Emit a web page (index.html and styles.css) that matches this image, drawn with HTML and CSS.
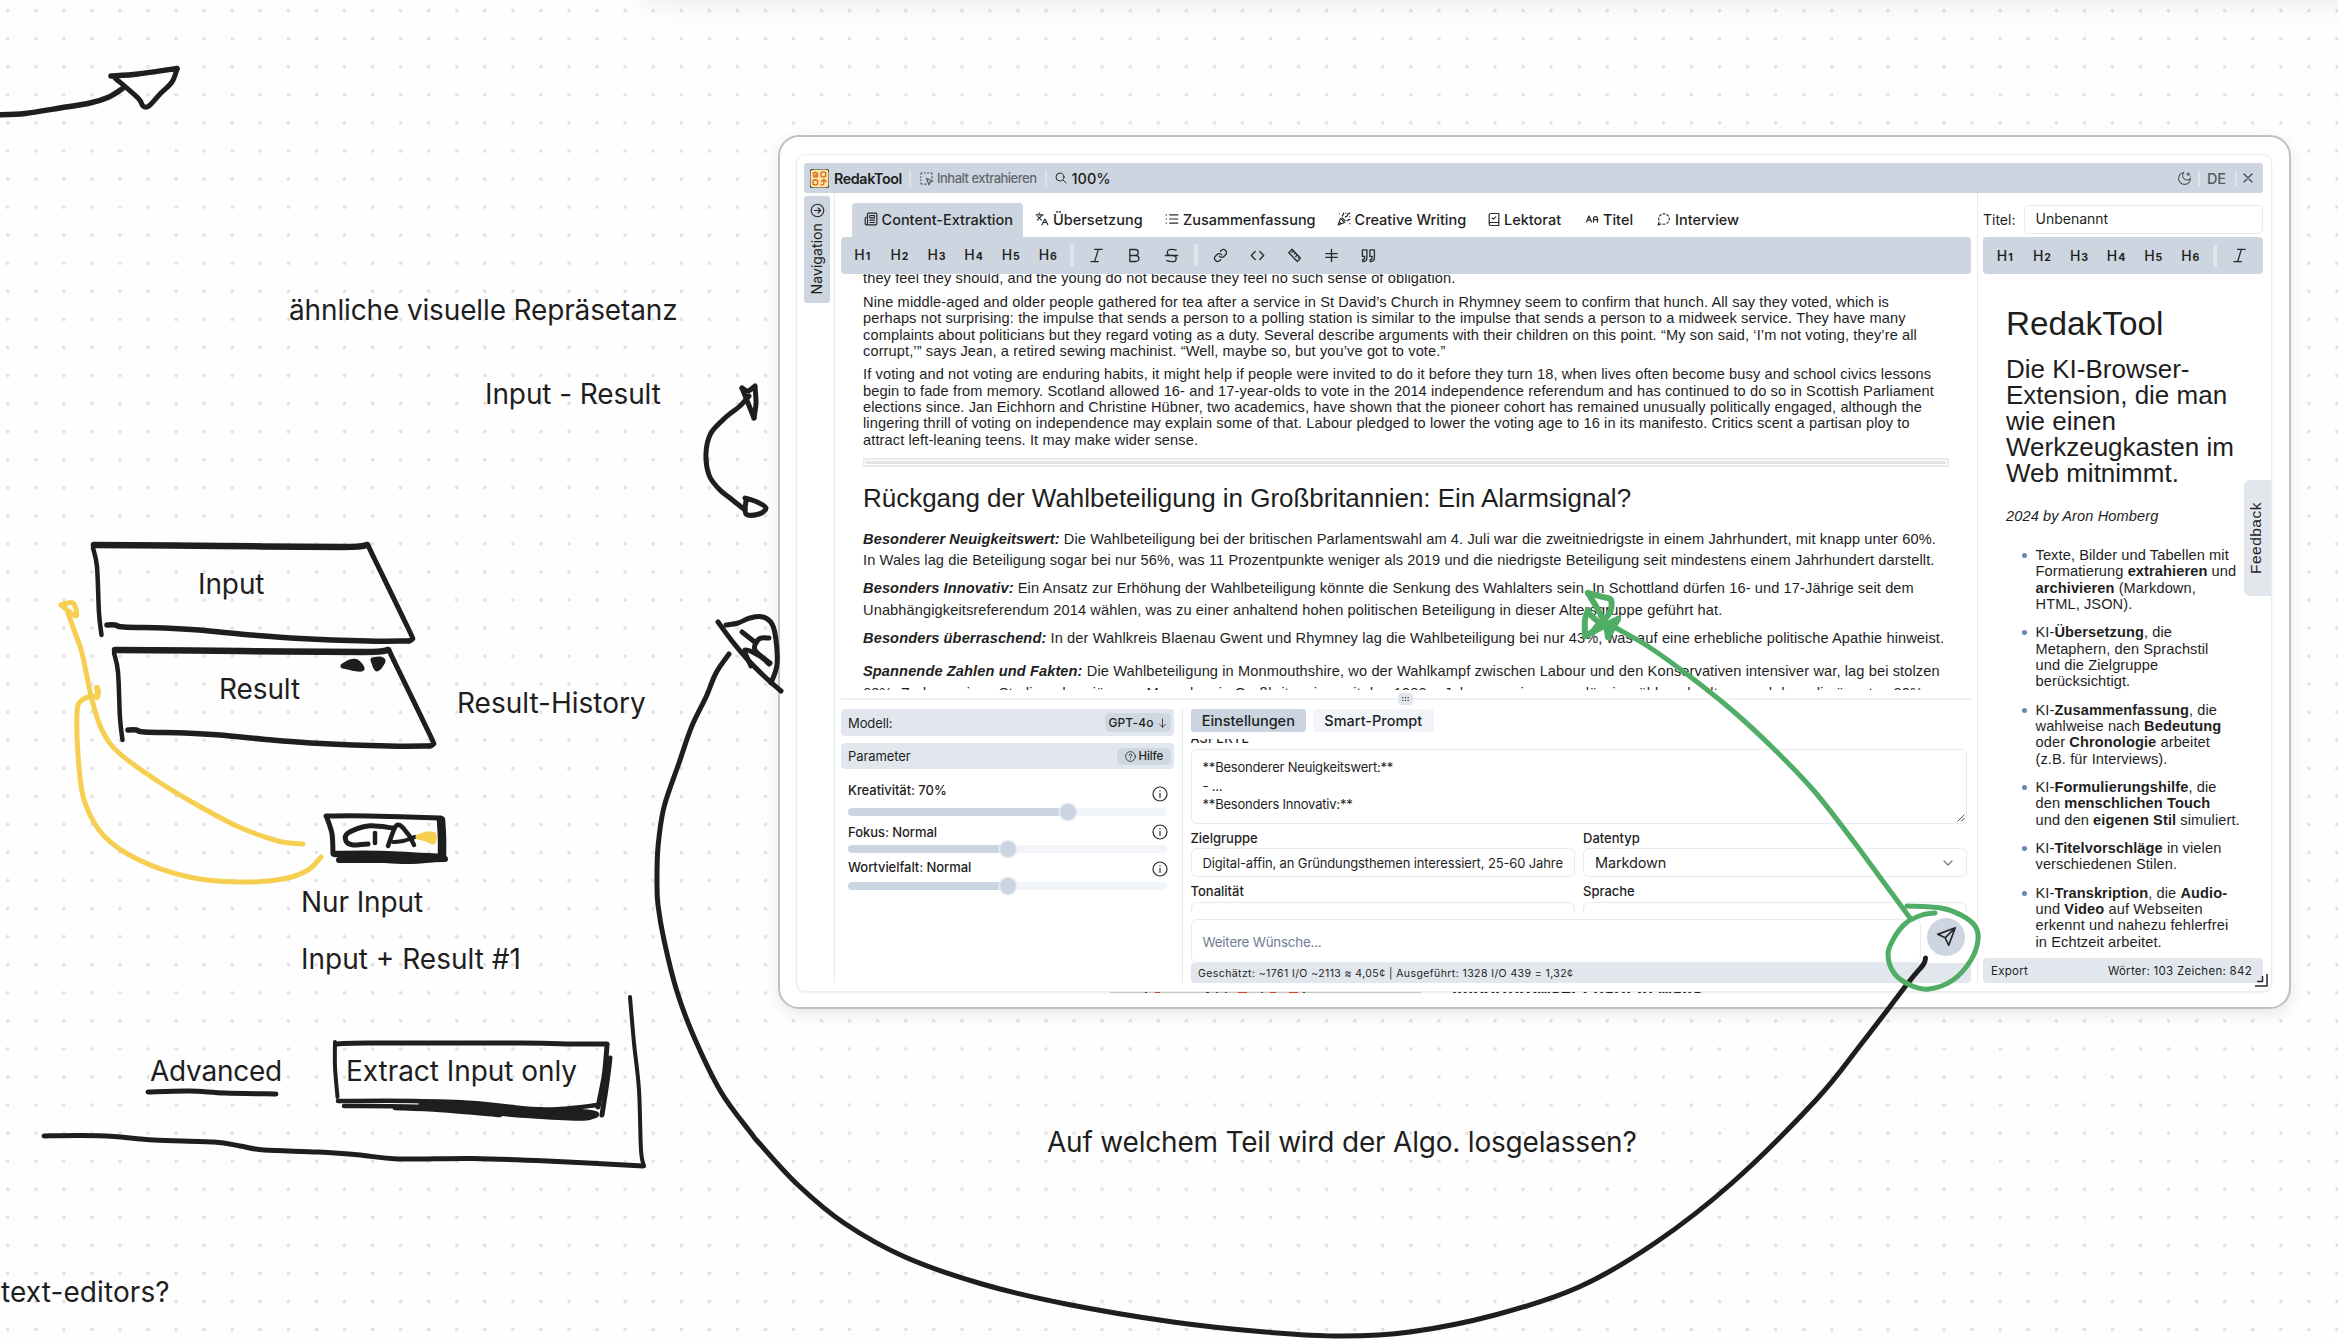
FILE: index.html
```html
<!DOCTYPE html>
<html lang="de">
<head>
<meta charset="utf-8">
<title>RedakTool Whiteboard</title>
<link rel="stylesheet" href="styles.css">
</head>
<body>
<div class="board">
  <div class="board-toolbar-shadow"></div>

  <p class="note n-repr">ähnliche visuelle Repräsetanz</p>
  <p class="note n-inres">Input - Result</p>
  <p class="note n-input">Input</p>
  <p class="note n-result">Result</p>
  <p class="note n-history">Result-History</p>
  <p class="note n-nur">Nur Input</p>
  <p class="note n-plus">Input + Result #1</p>
  <p class="note n-adv">Advanced</p>
  <p class="note n-extract">Extract Input only</p>
  <p class="note n-editors">text-editors?</p>
  <p class="note n-algo">Auf welchem Teil wird der Algo. losgelassen?</p>

  <section class="frame">
    <div class="behind"><i class="photo"></i><i class="headline">importbrowser charit in waits</i></div>
    <div class="window">
      <header class="titlebar">
        <svg class="logo" viewBox="0 0 19 19"><rect width="19" height="19" rx="3" fill="#fbe7a0"/><g fill="none" stroke="#d9622b" stroke-width="1.3"><path d="M3 4.2q2.2-1.4 4.4 0v3.6H3.4M3 6.1h4"/><rect x="11" y="3.2" width="4.6" height="4.6" rx=".8"/><rect x="3" y="11" width="4.6" height="4.8" rx="1.4"/><path d="M11 15.8h1.500q1.400 0 1.400-1.600v-3M11.500 12.500l2.400-2 2.400 2"/></g></svg>
        <b class="brand">RedakTool</b>
        <i class="sep s1"></i>
        <svg class="ic-sel" viewBox="0 0 24 24"><path d="M5 3a2 2 0 0 0-2 2M19 3a2 2 0 0 1 2 2M5 21a2 2 0 0 1-2-2M9 3h1M9 21h2M14 3h1M3 9v1M21 9v2M3 14v1M12 12l4 10 1.700-4.300L22 16z"/></svg>
        <span class="extract">Inhalt extrahieren</span>
        <i class="sep s2"></i>
        <svg class="ic-zoom" viewBox="0 0 24 24"><circle cx="10" cy="10" r="8"/><path d="M22 22l-6-6"/></svg>
        <span class="zoom">100%</span>
        <span class="grow"></span>
        <svg class="ic-moon" viewBox="0 0 24 24"><path d="M11 2.500a7 7 0 0 0 10.500 9.500A9.500 9.500 0 1 1 11 2.500M18 3v4M20 5h-4M21.500 8v.1"/></svg>
        <i class="sep"></i>
        <span class="lang">DE</span>
        <i class="sep"></i>
        <svg class="ic-x" viewBox="0 0 10 10"><path d="M1 1l8 8M9 1l-8 8"/></svg>
      </header>

      <div class="body">
        <nav class="side">
          <div class="navtab">
            <svg viewBox="0 0 24 24"><circle cx="12" cy="12" r="10"/><path d="M7 12h10M13 8l4 4-4 4"/></svg>
            <span>Navigation</span>
          </div>
        </nav>

        <main class="center">
          <div class="tabs">
            <a class="tab active t1"><svg viewBox="0 0 24 24"><path d="M4 22h16a2 2 0 0 0 2-2V4a2 2 0 0 0-2-2H8a2 2 0 0 0-2 2v16a2 2 0 0 1-4 0v-9c0-1 1-2 2-2h2M18 14h-8M18 18h-8M10 6h8v4h-8z"/></svg><span>Content-Extraktion</span></a>
            <a class="tab t2"><svg viewBox="0 0 24 24"><path d="M5 8l6 6M4 14l6-6 2-3M2 5h12M7 2h1M22 22l-5-10-5 10M14 18h6"/></svg><span>Übersetzung</span></a>
            <a class="tab t3"><svg viewBox="0 0 24 24"><path d="M8 5h14M8 12h14M8 19h14M2 5h.5M2 12h.5M2 19h.5"/></svg><span>Zusammenfassung</span></a>
            <a class="tab t4"><svg viewBox="0 0 24 24"><path d="M6 11L2 22l11-4zM9 10l5 5M4 17l3 3M4 3h.1M22 8h.1M15 2h.1M22 20h.1M22 2l-2.200.8a3 3 0 0 0-2 3c0 1-.7 1.600-1.500 1.600H16c-.9 0-1.600.6-1.800 1.500M22 13l-1-.3c-.8-.3-1.700.2-1.900 1.100-.1.700-.7 1.200-1.400 1.200H17M11 2l.3.800c.3.900-.2 1.800-1 2-.7.100-1.200.800-1.200 1.500V7"/></svg><span>Creative Writing</span></a>
            <a class="tab t5"><svg viewBox="0 0 20 24"><path d="M2 20V4a2.500 2.500 0 0 1 2.500-2H18v20H4.500a2.500 2.500 0 0 1 0-5H18M7 9.500l2 2 4-4"/></svg><span>Lektorat</span></a>
            <a class="tab t6"><svg viewBox="0 0 26 20"><path d="M2 16L7 4l5 12M4 12h6M16 16V9q0-4 4-4t4 4v7M16 11h8"/></svg><span>Titel</span></a>
            <a class="tab t7"><svg viewBox="0 0 24 24"><path d="M13.500 3.100q-1.500-.2-3 0M19.300 6.800a9 9 0 0 0-2.100-2.100M20.900 13.500q.2-1.500 0-3M17.200 19.300a9 9 0 0 0 2.100-2.100M10.500 20.900q1.500.2 3 0M3.500 17.500L2 22l4.500-1.500M3.100 10.500q-.2 1.400.2 3.400M6.800 4.700a9 9 0 0 0-2.100 2.100"/></svg><span>Interview</span></a>
          </div>
          <div class="toolbar">
            <span class="h">H<b>1</b></span><span class="h">H<b>2</b></span><span class="h">H<b>3</b></span><span class="h">H<b>4</b></span><span class="h">H<b>5</b></span><span class="h">H<b>6</b></span>
            <i class="bar"></i>
            <span class="t"><svg viewBox="0 0 16 16"><path d="M6 1.500h8M2 14.500h8M10 1.500l-4 13"/></svg></span>
            <span class="t"><svg viewBox="0 0 16 16"><path d="M3 8h6.500a3.200 3.200 0 0 1 0 6.400H3V1.600h5.800a3.200 3.200 0 0 1 0 6.400"/></svg></span>
            <span class="t"><svg viewBox="0 0 16 16"><path d="M13 2.200Q11 1.500 8 1.500 3.500 1.500 3.500 4.800 3.500 8 8 8h1q4 0 4 3.300T9 14.500q-3.500 0-6-1M1.500 8h13"/></svg></span>
            <i class="bar"></i>
            <span class="t"><svg viewBox="0 0 24 24"><path class="w2" d="M10 13a5 5 0 0 0 7.500.5l3-3a5 5 0 0 0-7-7l-1.700 1.700M14 11a5 5 0 0 0-7.500-.5l-3 3a5 5 0 0 0 7 7l1.700-1.700"/></svg></span>
            <span class="t"><svg viewBox="0 0 16 16"><path d="M10.500 3.800L14.600 8l-4.100 4.200M5.500 3.800L1.400 8l4.100 4.200"/></svg></span>
            <span class="t"><svg viewBox="0 0 16 16"><path d="M2 5l3.400-3.600 9 9.400L11 14.400zM7 3l-1.600 1.700M9 5.200L8 6.300M11 7.300L9.400 9M13 9.400l-1 1.100"/></svg></span>
            <span class="t"><svg viewBox="0 0 16 16"><path d="M2 6h12M2 10h12M8 1.500v13"/></svg></span>
            <span class="t"><svg viewBox="0 0 16 16"><path d="M1.500 2h4.800v8q0 4.500-4.500 4.500v-2.200q2 0 2-2V9H1.500zM9.500 2h4.800v8q0 4.500-4.500 4.500v-2.200q2 0 2-2V9H9.500z"/></svg></span>
          </div>

          <article class="editor">
            <p class="en">they feel they should, and the young do not because they feel no such sense of obligation.</p>
            <p class="en">Nine middle-aged and older people gathered for tea after a service in St David’s Church in Rhymney seem to confirm that hunch. All say they voted, which is<br>perhaps not surprising: the impulse that sends a person to a polling station is similar to the impulse that sends a person to a midweek service. They have many<br>complaints about politicians but they regard voting as a duty. Several describe arguments with their children on this point. “My son said, ‘I’m not voting, they’re all<br>corrupt,’” says Jean, a retired sewing machinist. “Well, maybe so, but you’ve got to vote.”</p>
            <p class="en">If voting and not voting are enduring habits, it might help if people were invited to do it before they turn 18, when lives often become busy and school civics lessons<br>begin to fade from memory. Scotland allowed 16- and 17-year-olds to vote in the 2014 independence referendum and has continued to do so in Scottish Parliament<br>elections since. Jan Eichhorn and Christine Hübner, two academics, have shown that the pioneer cohort has remained unusually politically engaged, although the<br>lingering thrill of voting on independence may explain some of that. Labour pledged to lower the voting age to 16 in its manifesto. Critics scent a partisan ploy to<br>attract left-leaning teens. It may make wider sense.</p>
            <div class="rule"><i></i></div>
            <h2>Rückgang der Wahlbeteiligung in Großbritannien: Ein Alarmsignal?</h2>
            <p class="de"><b>Besonderer Neuigkeitswert:</b> Die Wahlbeteiligung bei der britischen Parlamentswahl am 4. Juli war die zweitniedrigste in einem Jahrhundert, mit knapp unter 60%.<br>In Wales lag die Beteiligung sogar bei nur 56%, was 11 Prozentpunkte weniger als 2019 und die niedrigste Beteiligung seit mindestens einem Jahrhundert darstellt.</p>
            <p class="de"><b>Besonders Innovativ:</b> Ein Ansatz zur Erhöhung der Wahlbeteiligung könnte die Senkung des Wahlalters sein. In Schottland dürfen 16- und 17-Jährige seit dem<br>Unabhängigkeitsreferendum 2014 wählen, was zu einer anhaltend hohen politischen Beteiligung in dieser Altersgruppe geführt hat.</p>
            <p class="de"><b>Besonders überraschend:</b> In der Wahlkreis Blaenau Gwent und Rhymney lag die Wahlbeteiligung bei nur 43%, was auf eine erhebliche politische Apathie hinweist.</p>
            <p class="de last"><b>Spannende Zahlen und Fakten:</b> Die Wahlbeteiligung in Monmouthshire, wo der Wahlkampf zwischen Labour und den Konservativen intensiver war, lag bei stolzen<br>68%. Zudem zeigen Studien, dass jüngere Menschen in Großbritannien seit den 1980er Jahren weniger zuverlässig wählen als ältere, und dass die ärmsten 20%</p>
          </article>

          <div class="splitter"><i class="grip"><svg viewBox="0 0 8 6"><path d="M1 1.500h.1M4 1.500h.1M7 1.500h.1M1 4.500h.1M4 4.500h.1M7 4.500h.1"/></svg></i></div>

          <div class="lower">
            <section class="params">
              <div class="prow"><span>Modell:</span><span class="chip gpt">GPT-4o<svg viewBox="0 0 10 12"><path d="M5 1v10M1.500 7.500L5 11l3.500-3.500"/></svg></span></div>
              <div class="prow"><span>Parameter</span><span class="chip help"><svg viewBox="0 0 12 12"><circle cx="6" cy="6" r="5.300"/><path d="M4.500 4.600Q4.700 3.300 6 3.300t1.500 1.200Q7.500 5.500 6 6.300v.7M6 8.700v.1"/></svg>Hilfe</span></div>
              <div class="slider k1"><div class="cap"><span>Kreativität: 70%</span><svg viewBox="0 0 16 16"><circle cx="8" cy="8" r="7"/><path d="M8 7.300v4M8 4.700v.3"/></svg></div><div class="track"><i style="width:219.500px"></i></div></div>
              <div class="slider k2"><div class="cap"><span>Fokus: Normal</span><svg viewBox="0 0 16 16"><circle cx="8" cy="8" r="7"/><path d="M8 7.300v4M8 4.700v.3"/></svg></div><div class="track"><i style="width:159.500px"></i></div></div>
              <div class="slider k3"><div class="cap"><span>Wortvielfalt: Normal</span><svg viewBox="0 0 16 16"><circle cx="8" cy="8" r="7"/><path d="M8 7.300v4M8 4.700v.3"/></svg></div><div class="track"><i style="width:159.500px"></i></div></div>
            </section>
            <section class="prompt">
              <div class="ptabs"><span class="on">Einstellungen</span><span class="off">Smart-Prompt</span></div>
              <div class="form">
                <div class="aspects">ASPEKTE</div>
                <div class="area">**Besonderer Neuigkeitswert:**<br>- ...<br>**Besonders Innovativ:**<svg viewBox="0 0 10 10"><path d="M1 9l8-8M5.500 9L9 5.500"/></svg></div>
                <div class="cols">
                  <div class="c1"><label>Zielgruppe</label><div class="inp">Digital-affin, an Gründungsthemen interessiert, 25-60 Jahre</div><label>Tonalität</label><div class="inp"></div></div>
                  <div class="c2"><label>Datentyp</label><div class="inp big">Markdown<svg viewBox="0 0 10 6"><path d="M1 1l4 4 4-4"/></svg></div><label>Sprache</label><div class="inp big low">Deutsch</div></div>
                </div>
              </div>
              <div class="wish"><div class="wishbox">Weitere Wünsche...</div><div class="send"><svg viewBox="0 0 24 24"><path d="M22 2L2 9.500l8.500 4L14.500 22zM22 2L10.500 13.500"/></svg></div></div>
              <div class="status">Geschätzt: ~1761 I/O ~2113 ≈ 4,05¢ | Ausgeführt: 1328 I/O 439 = 1,32¢</div>
            </section>
          </div>
        </main>

        <aside class="right">
          <div class="titlerow"><span>Titel:</span><div class="tinput">Unbenannt</div></div>
          <div class="toolbar">
            <span class="h">H<b>1</b></span><span class="h">H<b>2</b></span><span class="h">H<b>3</b></span><span class="h">H<b>4</b></span><span class="h">H<b>5</b></span><span class="h">H<b>6</b></span>
            <i class="bar"></i>
            <span class="t"><svg viewBox="0 0 16 16"><path d="M6 1.500h8M2 14.500h8M10 1.500l-4 13"/></svg></span>
          </div>
          <article class="doc">
            <h1>RedakTool</h1>
            <h3>Die KI-Browser-<br>Extension, die man<br>wie einen<br>Werkzeugkasten im<br>Web mitnimmt.</h3>
            <p><em>2024 by Aron Homberg</em></p>
            <ul>
              <li>Texte, Bilder und Tabellen mit<br>Formatierung <b>extrahieren</b> und<br><b>archivieren</b> (Markdown,<br>HTML, JSON).</li>
              <li>KI-<b>Übersetzung</b>, die<br>Metaphern, den Sprachstil<br>und die Zielgruppe<br>berücksichtigt.</li>
              <li>KI-<b>Zusammenfassung</b>, die<br>wahlweise nach <b>Bedeutung</b><br>oder <b>Chronologie</b> arbeitet<br>(z.B. für Interviews).</li>
              <li>KI-<b>Formulierungshilfe</b>, die<br>den <b>menschlichen Touch</b><br>und den <b>eigenen Stil</b> simuliert.</li>
              <li>KI-<b>Titelvorschläge</b> in vielen<br>verschiedenen Stilen.</li>
              <li>KI-<b>Transkription</b>, die <b>Audio-</b><br>und <b>Video</b> auf Webseiten<br>erkennt und nahezu fehlerfrei<br>in Echtzeit arbeitet.</li>
            </ul>
          </article>
          <footer><span>Export</span><span>Wörter: 103 Zeichen: 842</span></footer>
        </aside>
      </div>
      <div class="feedback"><span>Feedback</span></div>
      <svg class="resize" viewBox="0 0 14 14"><path d="M1 13h12V1M3 8.500h5.500V3"/></svg>
    </div>
  </section>

  <svg class="ink" viewBox="0 0 2338 1340"></svg>
</div>
<script src="ink.js"></script>
</body>
</html>
```
FILE: styles.css
```css
* { box-sizing: border-box; }
body { margin: 0; font-family: Inter, "Liberation Sans", sans-serif; color: #1e1e1e; }
p, h1, h2, h3, ul { margin: 0; padding: 0; font-weight: 400; }
svg { fill: none; stroke: #26292e; stroke-linecap: round; stroke-linejoin: round; flex: none; display: block; }
.board {
  position: relative; width: 2338px; height: 1340px; overflow: hidden;
  background-color: #fefefe;
  background-image: radial-gradient(circle, #e1e1e1 1.4px, rgba(225,225,225,0) 2.2px);
  background-size: 28.07px 28.07px; background-position: -6.3px -3.4px;
}
.board-toolbar-shadow { position: absolute; left: 640px; top: -40px; width: 1800px; height: 40px; box-shadow: 0 0 30px rgba(0,0,0,.09); }

/* free text on the board */
.note { position: absolute; font-size: 28px; line-height: 34px; white-space: nowrap; letter-spacing: -.1px; }
.n-repr { left: 289px; top: 293px; letter-spacing: -.14px; }
.n-inres { left: 485px; top: 377px; }
.n-input { left: 198px; top: 567px; }
.n-result { left: 219px; top: 672px; }
.n-history { left: 457px; top: 686px; letter-spacing: 0; }
.n-nur { left: 301px; top: 885px; }
.n-plus { left: 301px; top: 942px; letter-spacing: 0; }
.n-adv { left: 150px; top: 1054px; letter-spacing: -.25px; }
.n-extract { left: 346px; top: 1054px; letter-spacing: -.05px; }
.n-editors { left: 1px; top: 1275px; letter-spacing: .1px; }
.n-algo { left: 1047px; top: 1125px; letter-spacing: -.2px; }

.frame { position: absolute; left: 778px; top: 135px; width: 1513px; height: 874px; border: 2px solid #c0c0c0; border-radius: 21px; background: #fff; box-shadow: 0 5px 16px rgba(0,0,0,.09); padding: 18px 17px; }
.behind { position: absolute; left: 1px; right: 0; top: 847px; height: 9px; overflow: hidden; }
.behind .photo { position: absolute; left: 329px; top: 6px; width: 311px; height: 3px; background: linear-gradient(90deg, transparent 35px, #444 35px 37px, transparent 37px 45px, #c44 45px 50px, transparent 50px 96px, #444 96px 99px, transparent 99px 106px, #555 106px 108px, transparent 108px 115px, #555 115px 117px, transparent 117px 128px, #d9492b 128px 137px, transparent 137px 151px, #555 151px 153px, transparent 153px 160px, #d9492b 160px 166px, transparent 166px 179px, #d9492b 179px 188px, transparent 188px 193px, #444 193px 195px, transparent 195px), #d5d3c8; }
.behind .headline { position: absolute; left: 671px; top: -1px; font: 700 18px/18px "Liberation Sans", sans-serif; white-space: nowrap; letter-spacing: 0; }
.window { position: relative; width: 1474px; height: 836px; border-radius: 8px; background: #fff; box-shadow: 0 0 0 1px #ececec, 0 1px 3px rgba(0,0,0,.14); padding: 8px 8px 0 7px; }

.titlebar { height: 30px; background: #cdd5e0; border-radius: 3px; display: flex; align-items: center; padding: 0 10px 0 6px; white-space: nowrap; }
.titlebar .logo { width: 19px; height: 19px; }
.brand { font-weight: 600; font-size: 14.300px; width: 68px; margin-left: 5px; letter-spacing: -.4px; }
.sep { width: 2px; height: 15px; background: #dfe5ed; }
.s1 { margin-left: 7px; }
.ic-sel { width: 15px; height: 15px; margin-left: 8px; stroke: #555b63; stroke-width: 2; }
.extract { font-size: 13px; font-weight: 500; color: #63686f; margin-left: 3px; width: 100px; letter-spacing: -.5px; }
.s2 { margin-left: 8px; }
.ic-zoom { width: 12px; height: 12px; margin-left: 8px; stroke-width: 2; }
.zoom { font-size: 14.500px; font-weight: 500; margin-left: 4.500px; }
.grow { flex: 1; }
.ic-moon { width: 15px; height: 15px; margin-right: 6px; stroke: #50555c; stroke-width: 1.800; }
.lang { font-size: 14.500px; font-weight: 500; color: #555a61; margin: 0 8px 0 7px; width: 20px; letter-spacing: -.3px; }
.ic-x { width: 10px; height: 10px; margin-left: 6px; stroke: #3d4249; stroke-width: 1.200; }

.body { display: flex; height: 790px; }
.side { width: 31px; border-right: 1px solid #e7e9ef; padding-top: 3px; }
.navtab { width: 26px; height: 107px; background: #cdd5e0; border-radius: 3px; display: flex; flex-direction: column; align-items: center; padding-top: 7px; gap: 5px; }
.navtab svg { width: 15px; height: 15px; stroke-width: 1.800; }
.navtab span { writing-mode: vertical-rl; transform: rotate(180deg); font-size: 14.200px; line-height: 16px; white-space: nowrap; }

.center { width: 1142px; padding: 0 6px 0 5.500px; display: flex; flex-direction: column; }
.tabs { display: flex; height: 44px; align-items: flex-end; padding-left: 11px; }
.tab { display: flex; align-items: center; height: 34px; gap: 4px; font-size: 14.500px; font-weight: 500; white-space: nowrap; padding: 0 0 1px 12px; }
.tab svg { width: 14px; height: 14px; stroke-width: 2; }
.tab.active { background: #cdd5e0; border-radius: 4px 4px 0 0; }
.t1 { width: 171.500px; } .t2 { width: 130px; } .t3 { width: 171.500px; } .t4 { width: 151.500px; } .t5 { width: 97px; } .t6 { width: 72px; }
.t5 svg { width: 12px; height: 15px; }
.t6 svg { height: 10px; stroke-width: 2.500; }
.toolbar { height: 37px; flex: none; background: #cdd5e0; border-radius: 4px; display: flex; align-items: center; padding-left: 3.300px; }
.toolbar span { width: 37.100px; display: flex; justify-content: center; align-items: baseline; font-size: 14px; line-height: 16px; font-weight: 500; gap: 1px; }
.toolbar .h { padding-top: 2px; }
.toolbar span b { font-size: 10.500px; font-weight: 700; }
.toolbar .t { align-items: center; }
.toolbar svg { width: 15px; height: 15px; stroke-width: 1.400; }
.toolbar .w2 { stroke-width: 2; }
.bar { width: 4px; height: 22px; background: #dfe5ed; margin: 0 4px; }

.editor { height: 416.500px; overflow: hidden; padding-left: 22.500px; white-space: nowrap; font-family: "Liberation Sans", Arial, sans-serif; font-size: 14.600px; letter-spacing: .11px; }
.en { line-height: 16.400px; margin-bottom: 6.800px; }
.en:first-child { margin-top: -4px; margin-bottom: 7.500px; }
.rule { width: 1086px; height: 9px; border: 2px solid #ebebeb; padding: 1px; margin: 9.300px 0 0; }
.rule i { display: block; height: 3px; background: #e3e3e3; }
.editor h2 { font-size: 26px; line-height: 30px; margin: 16px 0 16.200px; letter-spacing: -.02px; }
.de { line-height: 21.500px; margin-bottom: 6.700px; }
.de b { font-style: italic; }
.de.last { margin-top: 11.400px; }

.splitter { margin-top: 8.500px; height: 2px; background: #eff1f6; display: flex; justify-content: center; align-items: center; flex: none; }
.grip { width: 15px; height: 12px; border-radius: 3px; background: #e1e6ed; display: flex; align-items: center; justify-content: center; margin-left: -1px; }
.grip svg { width: 7px; height: 6px; stroke-width: 1.500; }
.lower { display: flex; padding-top: 9px; height: 283px; }
.params { width: 342px; border-right: 1px solid #e7e9f1; padding-right: 7.500px; }
.prow { height: 26.500px; background: #e2e7ee; border-radius: 4px; margin-bottom: 7px; display: flex; align-items: center; justify-content: space-between; padding: 0 3.500px 0 7.500px; font-size: 13px; letter-spacing: -.1px; }
.chip { background: #cfd7e1; border-radius: 5px; display: flex; align-items: center; font-weight: 500; }
.gpt { width: 66px; height: 19px; font-size: 12px; padding-left: 4px; gap: 5px; letter-spacing: .1px; }
.gpt svg { width: 9px; height: 10px; }
.help { width: 54px; height: 17px; font-size: 11.500px; padding-left: 8px; gap: 3px; }
.help svg { width: 11px; height: 11px; stroke-width: .9; }
.slider { padding: 0 6px 0 7.500px; font-size: 13px; font-weight: 500; letter-spacing: -.05px; }
.cap { display: flex; justify-content: space-between; line-height: 16px; }
.cap svg { width: 16px; height: 16px; stroke-width: 1.200; }
.track { height: 8px; margin-right: 1px; border-radius: 4px; background: #f1f5f9; display: flex; align-items: center; }
.track i { height: 8px; border-radius: 4px; background: #cbd5e1; display: flex; align-items: center; justify-content: flex-end; }
.track i::after { content: ""; width: 16px; height: 16px; border-radius: 50%; background: #cbd5e1; margin-right: -8px; flex: none; box-shadow: 0 0 0 1.500px #e9eef4; }
.k1 { padding-top: 6px; } .k1 svg { margin-top: 4px; } .k1 .track { margin-top: 6px; }
.k2 { padding-top: 8px; } .k2 .track { margin-top: 5px; }
.k3 { padding-top: 6px; } .k3 svg { margin-top: 2px; } .k3 .track { margin-top: 4.500px; }

.prompt { width: 788px; padding-left: 8px; display: flex; flex-direction: column; }
.ptabs { display: flex; gap: 7px; height: 23px; font-size: 14.500px; font-weight: 500; line-height: 24px; text-align: center; flex: none; }
.ptabs .on { width: 115.500px; background: #cbd5e1; border-radius: 3px; }
.ptabs .off { width: 120.500px; background: #f1f5f9; border-radius: 3px; }
.form { height: 173px; margin-top: 6.500px; overflow: hidden; padding-right: 4px; flex: none; }
.aspects { font-size: 12.500px; font-weight: 500; line-height: 16px; margin-top: -7.800px; height: 18px; letter-spacing: .3px; }
.area { position: relative; height: 74.500px; border: 1.500px solid #e8eaf1; border-radius: 6px; padding: 8px 11px; font-size: 13px; line-height: 18.600px; letter-spacing: -.2px; }
.area svg { position: absolute; right: 1px; bottom: 1px; width: 8px; height: 8px; stroke-width: 1; }
.cols { display: flex; gap: 8px; padding-top: 6px; }
.c1 { width: 384.500px; } .c2 { flex: 1; }
.cols label { display: block; font-size: 13px; font-weight: 500; line-height: 16px; margin-bottom: 2.500px; }
.inp { height: 29px; border: 1.500px solid #e8eaf1; border-radius: 6px; display: flex; align-items: center; justify-content: space-between; padding: 0 13px 0 11px; font-size: 13px; margin-bottom: 6px; white-space: nowrap; letter-spacing: -.13px; }
.big { font-size: 14.500px; }
.low { padding-top: 2px; }
.inp svg { width: 10px; height: 6px; stroke: #777; stroke-width: 1.200; }
.wish { display: flex; margin-top: 7px; height: 44px; flex: none; }
.wishbox { width: 730.500px; border: 1.500px solid #e8eaf1; border-radius: 6px; padding-left: 11px; font-size: 13.300px; letter-spacing: -.18px; color: #6f7c93; line-height: 44px; }
.send { width: 38px; height: 38px; margin: -1px 0 0 6px; border-radius: 50%; background: #cdd5e0; display: flex; align-items: center; justify-content: center; }
.send svg { width: 21px; height: 21px; stroke-width: 2; }
.status { height: 20px; background: #e2e7ee; border-radius: 4px; font-size: 10.500px; line-height: 21px; letter-spacing: .41px; padding-left: 7.500px; flex: none; white-space: nowrap; }

.right { width: 286px; border-left: 1px solid #e9ebf0; padding-left: 5px; display: flex; flex-direction: column; }
.titlerow { display: flex; align-items: center; height: 44px; padding-top: 8px; font-size: 14px; justify-content: space-between; flex: none; }
.tinput { width: 239px; height: 29px; border: 1.500px solid #e8eaf1; border-radius: 5px; padding-left: 10.500px; line-height: 26px; }
.doc { flex: 1; min-height: 0; padding: 28px 0 0 23px; font-family: "Liberation Sans", Arial, sans-serif; font-size: 14.600px; letter-spacing: .1px; white-space: nowrap; }
.doc h1 { font-size: 33.300px; line-height: 44px; letter-spacing: 0; }
.doc h3 { font-size: 26px; line-height: 26.100px; margin-top: 9.500px; letter-spacing: 0; }
.doc p { line-height: 17px; margin-top: 22.500px; }
.doc ul { list-style: none; padding-left: 29.500px; margin-top: 21.500px; }
.doc li { line-height: 16.330px; margin-bottom: 12px; }
.doc li::before { content: ""; float: left; width: 5px; height: 5px; border-radius: 50%; background: #6a86b3; margin: 6px 0 0 -13.500px; }
footer { height: 25px; background: #e2e7ee; border-radius: 4px; display: flex; justify-content: space-between; align-items: center; padding: 1px 11px 0 8px; font-size: 11.500px; letter-spacing: .28px; white-space: nowrap; flex: none; }
.feedback { position: absolute; right: 0; top: 325px; width: 27px; height: 116px; background: #e2e7ee; border-radius: 6px 0 0 6px; display: flex; align-items: center; justify-content: center; }
.feedback span { writing-mode: vertical-rl; transform: rotate(180deg); font: 15.500px/18px "Liberation Sans", sans-serif; letter-spacing: .5px; margin-right: 3px; }
.resize { position: absolute; right: 3px; bottom: 4px; width: 14px; height: 14px; stroke-width: 1.500; stroke-linecap: butt; stroke-linejoin: miter; }
.ink { position: absolute; left: 0; top: 0; width: 2338px; height: 1340px; }
```
FILE: ink.js
```js
// Pen strokes on the board: [colour, width, points, filled]. Curves pass through every point.
const K = '#1e1e1e', Y = '#f6cf50', G = '#50ad66';
const box = (dx, dy) => [
  [K, 6.5, [[94+dx,545+dy],[220+dx,546+dy],[343+dx,547+dy],[367+dx,545+dy]]],
  [K, 5, [[368+dx,545+dy],[375+dx,560+dy],[409+dx,630+dy],[412+dx,639+dy],[408+dx,641+dy]]],
  [K, 5.5, [[409+dx,641+dy],[368+dx,641+dy],[300+dx,638.5+dy],[240+dx,634+dy],[199+dx,630+dy],[164+dx,628+dy],[124+dx,627+dy],[115+dx,625+dy],[107+dx,625+dy]]],
  [K, 4.5, [[93+dx,548+dy],[97+dx,567+dy],[99+dx,613+dy],[101.5+dx,635+dy]]]
];
const strokes = [
  [K, 5.5, [[-4,115],[25,113.5],[60,108],[90,103],[109,97],[122,89]]],
  [K, 5.5, [[111,76],[138,74],[177,68.5]]],
  [K, 5, [[177,69],[172,82],[160,94],[149,106],[143,106],[138,98],[115,78]]],
  [K, 5, [[742,388],[748,391],[755,386]]], [K, 5, [[755,387],[756,403],[754,418]]], [K, 5, [[754,418],[742,388]]],
  [K, 5, [[749,396],[740,406],[726,417],[711,433],[706,453],[709,475],[719,489],[730,498],[745,510]]],
  [K, 5, [[745,498],[757,502],[766,508],[759,514],[746,514],[746,500]]],
  ...box(0, 0), ...box(21, 105),
  [K, 5, [[343,666],[350,662],[357,662],[362,669],[352,668],[343,666]], true],
  [K, 5, [[373,660],[379,659],[383,661],[377,669],[373,660]], true],
  [Y, 5, [[303,844],[278,841],[239,827],[199,806],[159,782],[119,753],[102,730],[92,700],[82,653],[74,630],[68,613]]],
  [Y, 5, [[61,605],[73,603],[76,616],[61,605]]],
  [Y, 5, [[321,857],[308,870],[283,879],[239,882],[189,877],[139,860],[104,836],[85,803],[79,767],[77,713],[82,700],[93,696]]],
  [Y, 6, [[97,688],[98,692],[97,697]]],
  [K, 5, [[326,816],[368,816],[440,818]]],
  [K, 8.5, [[441,820],[442,838],[442,857]]],
  [K, 5, [[327,818],[332,834],[333,854]]],
  [K, 6.5, [[335,854],[380,854],[441,857]]],
  [K, 6, [[339,860],[390,860],[445,859]]],
  [K, 6, [[370,859],[408,861],[435,859]]],
  [K, 5, [[393,828],[368,826],[348,833],[346,841],[353,845],[368,844]]],
  [K, 4.5, [[375,833],[375,843]]],
  [K, 4.5, [[388,846],[397,825],[408,834],[414,845]]],
  [K, 4, [[393,842],[403,841],[415,837]]],
  [Y, 5, [[418,837],[427,834],[434,835],[433,842],[426,839],[418,837]], true],
  [K, 5, [[718,622],[732,641],[748,660],[765,677],[781,691]]],
  [K, 5, [[726,625],[738,623],[750,618],[763,617],[772,624],[776,640],[777,665],[771,683]]],
  [K, 5, [[742,632],[756,643]]], [K, 5, [[769,638],[759,639],[755,650],[770,663]]],
  [K, 5, [[751,666],[745,650],[760,656],[769,664]]],
  [K, 5, [[729,654],[716,673],[706,697],[691.5,727],[679,763],[664,807],[658,847],[657,883],[658,905],[664,940],[676.5,990],[694,1037],[721,1092],[751,1133],[760,1144],[798,1185],[844,1223],[905,1257],[982,1284],[1066,1304],[1173,1322],[1265,1332],[1342,1336],[1410,1332],[1495,1315],[1579,1287],[1655,1243],[1732,1183],[1816,1100],[1862,1043],[1908,983],[1923,965],[1925.5,958]]],
  [K, 4, [[630,997],[634,1043],[639,1090],[641,1150],[644,1166]]],
  [K, 5, [[44,1136],[80,1135.5],[114,1136.5],[154,1140],[214,1142],[240,1146],[264,1150],[318,1152],[360,1155],[398,1159],[473,1158.5],[547,1161],[643,1166]]],
  [K, 5, [[148,1092],[189,1091],[225,1093],[276,1094]]],
  [K, 4, [[335,1042],[335,1067],[337.5,1097]]],
  [K, 5, [[336,1044],[368,1043],[522,1043],[572,1044],[607,1044]]],
  [K, 5, [[607,1045],[606,1058],[604,1077],[598,1107]]],
  [K, 5, [[610,1058],[607,1082],[602,1115]]],
  [K, 4.5, [[338,1101],[413,1101],[473,1103],[532,1109],[560,1109],[598,1105]]],
  [K, 4.5, [[344,1106],[423,1107],[480,1112],[530,1116],[583,1118.5],[596,1114]]],
  [K, 4.5, [[395,1108],[440,1110],[500,1115]]],
  [K, 3, [[420,1104],[473,1104],[532,1109],[575,1110],[597,1113],[583,1118],[497,1113],[420,1104]], true],
  [G, 5, [[1616,628],[1649,647],[1688,675],[1733,711],[1775,750],[1815,792],[1854,842],[1882,880],[1910,918]]],
  [G, 5, [[1935,913],[1922,915],[1906,923],[1894,938],[1888,954],[1894,973],[1910,985],[1929,989],[1953,980],[1971,960],[1978,940],[1975,926],[1961,915],[1941,908],[1907,906]]],
  [G, 6, [[1588,593],[1597,608],[1605,623],[1608,637]]],
  [G, 6, [[1608,637],[1618,619]]],
  [G, 6, [[1618,619],[1606,625],[1585,636]]],
  [G, 6, [[1585,636],[1585,620],[1588,610]]],
  [G, 6, [[1588,612],[1600,622],[1610,612],[1611,600],[1603,597],[1588,593]]],
  [G, 6, [[1592,633],[1600,624],[1612,628]]]
];
const svg = document.querySelector('.ink');
for (const [color, width, p, filled] of strokes) {
  let d = `M${p[0]}`;
  for (let i = 0; i < p.length - 1; i++) {
    const a = p[i - 1] || p[i], b = p[i], c = p[i + 1], e = p[i + 2] || c;
    d += `C${b[0] + (c[0] - a[0]) / 6} ${b[1] + (c[1] - a[1]) / 6} ${c[0] - (e[0] - b[0]) / 6} ${c[1] - (e[1] - b[1]) / 6} ${c}`;
  }
  const path = document.createElementNS('http://www.w3.org/2000/svg', 'path');
  path.setAttribute('d', d);
  path.setAttribute('stroke', color);
  path.setAttribute('stroke-width', width);
  path.setAttribute('fill', filled ? color : 'none');
  svg.appendChild(path);
}
```
